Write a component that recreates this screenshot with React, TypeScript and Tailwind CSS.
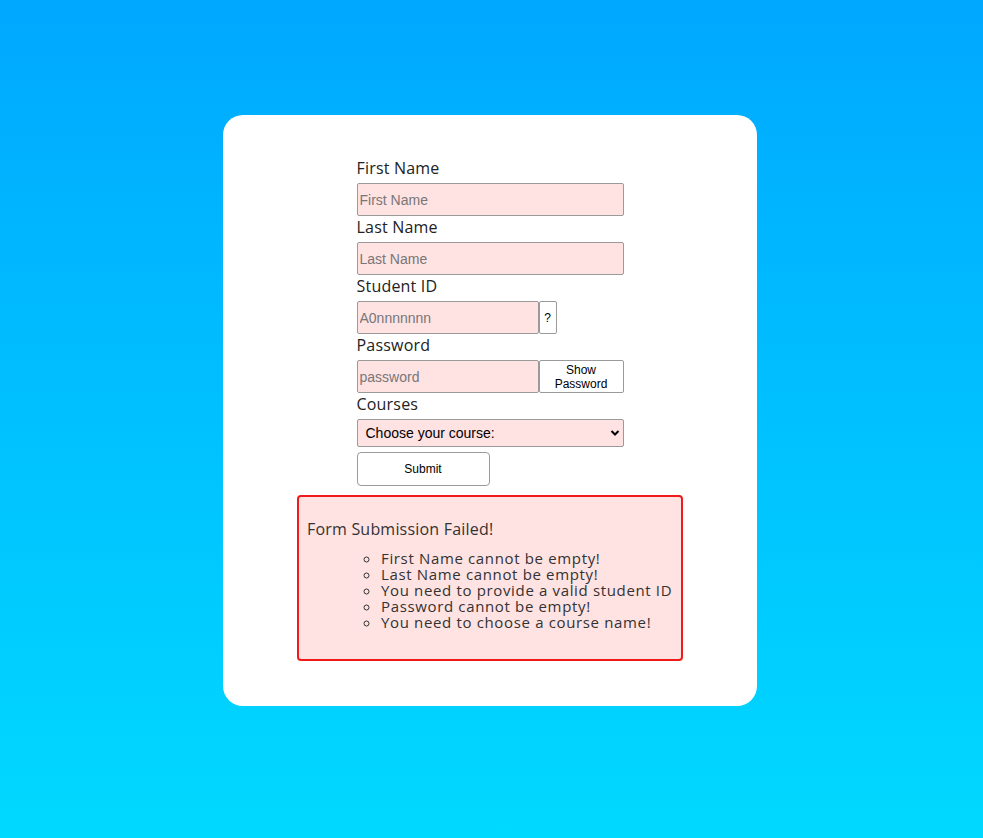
const errors = [
  "First Name cannot be empty!",
  "Last Name cannot be empty!",
  "You need to provide a valid student ID",
  "Password cannot be empty!",
  "You need to choose a course name!",
];

const font = { fontFamily: "'Open Sans', sans-serif" };

const Label = ({ children }: { children: string }) => (
  <label
    className="block h-[26px] text-[16px] leading-[22px] tracking-[0.2px] text-[#222]"
    style={font}
  >
    {children}
  </label>
);

const inputCls =
  "h-[33px] bg-[#ffe2e2] border border-[#9a9a9a] rounded-[2px] px-[2px] text-[14px] text-black placeholder:text-[#777] outline-none font-['Liberation_Sans',Arial,sans-serif]";

export default function App() {
  return (
    <div className="min-h-screen bg-gradient-to-b from-[#00a8ff] to-[#00d9ff] flex justify-center pt-[115px] pr-[3px]">
      <div className="w-[534px] h-[591px] bg-white rounded-[20px] flex flex-col items-center pt-[42px]">
        <form className="w-[267px] flex flex-col" onSubmit={(e) => e.preventDefault()}>
          <Label>First Name</Label>
          <input className={`${inputCls} w-full`} placeholder="First Name" />
          <Label>Last Name</Label>
          <input className={`${inputCls} w-full`} placeholder="Last Name" />
          <Label>Student ID</Label>
          <div className="flex">
            <input className={`${inputCls} w-[182px]`} placeholder="A0nnnnnnn" />
            <button
              type="button"
              className="w-[18px] h-[33px] bg-white border border-[#9a9a9a] rounded-[2px] text-[12px] font-['Liberation_Sans',Arial,sans-serif]"
            >
              ?
            </button>
          </div>
          <Label>Password</Label>
          <div className="flex">
            <input className={`${inputCls} w-[182px]`} placeholder="password" type="password" />
            <button
              type="button"
              className="w-[85px] h-[33px] bg-white border border-[#9a9a9a] rounded-[2px] text-[12px] leading-[14px] font-['Liberation_Sans',Arial,sans-serif]"
            >
              Show
              <br />
              Password
            </button>
          </div>
          <Label>Courses</Label>
          <div className="relative">
            <select className="w-full h-[28px] appearance-none bg-[#ffe2e2] border border-[#9a9a9a] rounded-[2px] pl-[8px] text-[14px] text-black outline-none font-['Liberation_Sans',Arial,sans-serif]">
              <option>Choose your course:</option>
            </select>
            <svg
              className="absolute right-[4px] top-[10px] pointer-events-none"
              width="10"
              height="8"
              viewBox="0 0 10 8"
            >
              <path d="M1.5 2 L5 5.5 L8.5 2" fill="none" stroke="#000" strokeWidth="2" />
            </svg>
          </div>
          <button
            type="submit"
            className="mt-[5px] w-[133px] h-[34px] bg-white border border-[#9a9a9a] rounded-[4px] text-[12px] font-['Liberation_Sans',Arial,sans-serif]"
          >
            Submit
          </button>
        </form>

        <div
          className="mt-[9px] w-[386px] h-[166px] bg-[#ffe2e2] border-2 border-[#f01a1a] rounded-[4px] pl-[8px] pt-[21px] text-[#333]"
          style={font}
        >
          <p className="text-[16px] leading-[22px] tracking-[0.2px]">Form Submission Failed!</p>
          <ul className="mt-[10px] pl-[74px] list-[circle] text-[15px] leading-[16px] tracking-[0.65px]">
            {errors.map((e) => (
              <li key={e}>{e}</li>
            ))}
          </ul>
        </div>
      </div>
    </div>
  );
}
